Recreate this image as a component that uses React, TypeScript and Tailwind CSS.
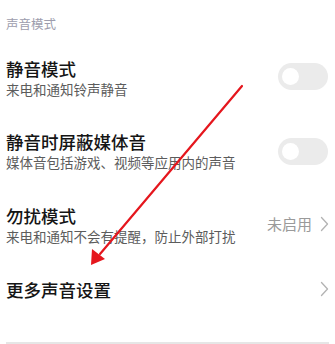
const Toggle = ({ className = '' }: { className?: string }) => (
    <div className={`w-[50px] h-[27px] rounded-full bg-[#ebebeb] flex items-center px-[4px] shrink-0 ${className}`}>
        <div className="w-[17px] h-[17px] rounded-full bg-white" />
    </div>
);

const Chevron = () => (
    <svg width="9" height="16" viewBox="0 0 9 16" className="shrink-0">
        <polyline points="1.5,1.5 7.5,8 1.5,14.5" fill="none" stroke="#b3b3b3" strokeWidth="1.3" strokeLinejoin="round" strokeLinecap="round" />
    </svg>
);

const App = () => {
    return (
        <div
            className="relative w-[335px] h-[344px] bg-white overflow-hidden"
            style={{ fontFamily: '"Noto Sans CJK SC", "Noto Sans", sans-serif' }}
        >
            <div className="h-[48px] flex items-center pl-[6px]">
                <span className="text-[12.5px] text-[#9d9dad]">声音模式</span>
            </div>

            <div className="h-[62px] flex items-center justify-between pl-[6px] pr-[7px]">
                <div className="flex flex-col">
                    <span className="text-[17.5px] leading-[20px] font-medium text-[#151515]">静音模式</span>
                    <span className="text-[13.5px] leading-[20px] text-[#5c5c5c]">来电和通知铃声静音</span>
                </div>
                <Toggle className="-mt-[5px]" />
            </div>

            <div className="h-[83px] flex items-center justify-between pl-[6px] pr-[7px]">
                <div className="flex flex-col">
                    <span className="text-[17.5px] leading-[21px] font-medium text-[#151515]">静音时屏蔽媒体音</span>
                    <span className="text-[13.5px] leading-[21px] text-[#5c5c5c]">媒体音包括游戏、视频等应用内的声音</span>
                </div>
                <Toggle />
            </div>

            <div className="h-[65px] flex items-center justify-between pl-[6px] pr-[6px]">
                <div className="flex flex-col">
                    <span className="text-[17.5px] leading-[21px] font-medium text-[#151515]">勿扰模式</span>
                    <span className="text-[13.5px] leading-[21px] text-[#5c5c5c]">来电和通知不会有提醒，防止外部打扰</span>
                </div>
                <div className="flex items-center gap-[8px] mt-[-3px]">
                    <span className="text-[15px] text-[#9a9a9a]">未启用</span>
                    <Chevron />
                </div>
            </div>

            <div className="h-[62px] flex items-center justify-between pl-[6px] pr-[6px]">
                <span className="text-[17.5px] leading-[21px] font-medium text-[#151515]">更多声音设置</span>
                <Chevron />
            </div>

            <div className="mt-[22px] mx-[6px] h-[2px] bg-[#e6e6e6]" />

            <svg className="absolute inset-0 pointer-events-none" width="335" height="344" viewBox="0 0 335 344">
                <line x1="242" y1="86" x2="100" y2="254" stroke="#e5161d" strokeWidth="2.2" strokeLinecap="round" />
                <polygon points="91,265 92,249 105,259" fill="#e5161d" />
            </svg>
        </div>
    );
};

export default App;
